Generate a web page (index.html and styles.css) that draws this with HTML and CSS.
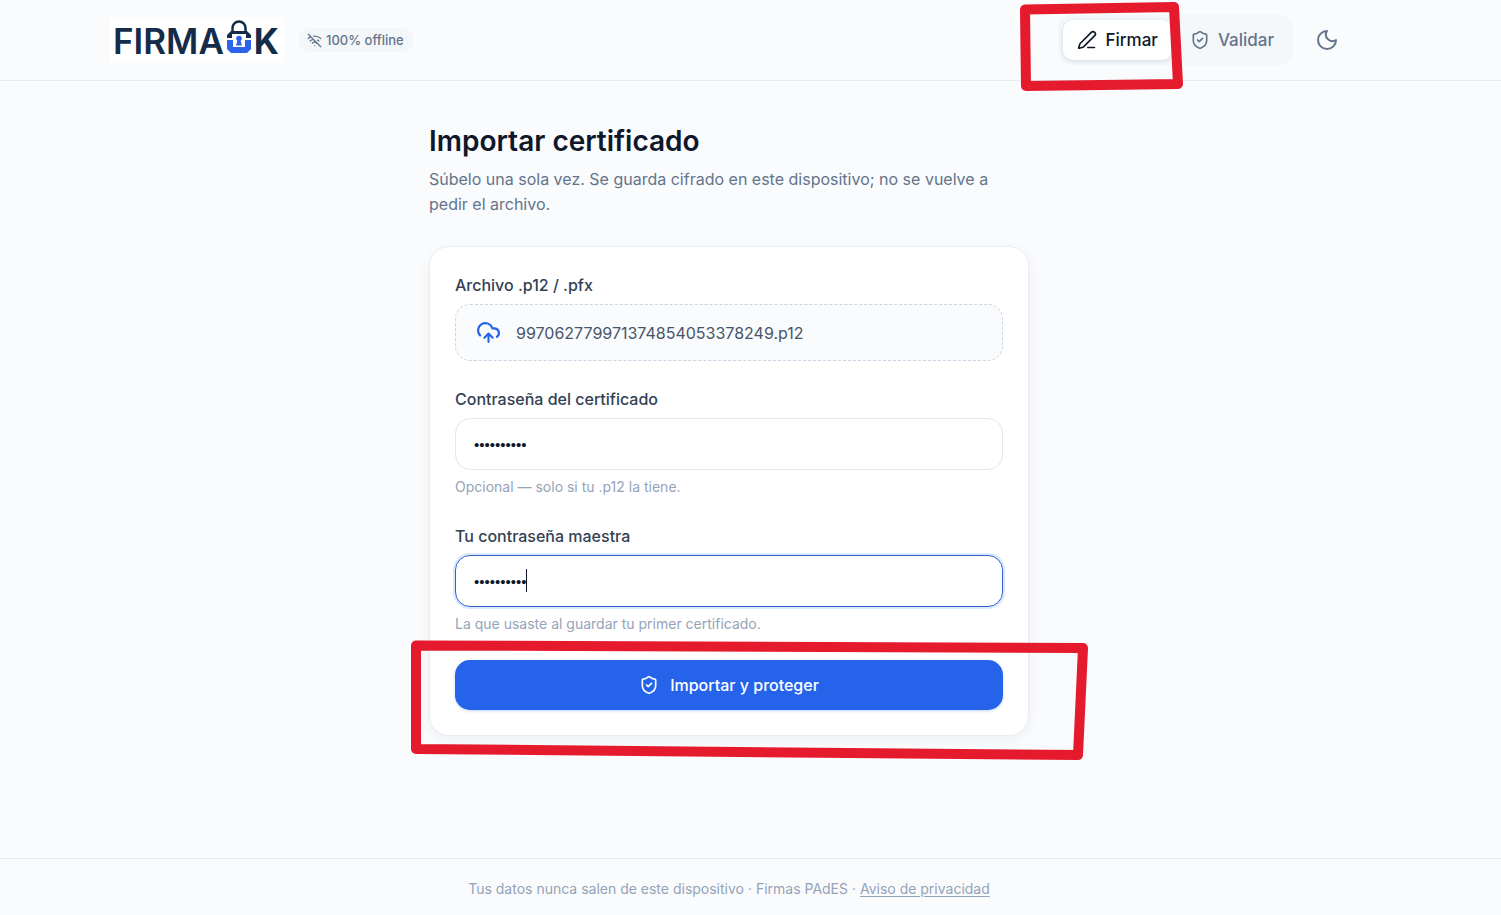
FILE: index.html
```html
<!DOCTYPE html>
<html lang="es">
<head>
<meta charset="utf-8">
<meta name="viewport" content="width=device-width, initial-scale=1">
<title>FirmaOK</title>
<link rel="stylesheet" href="styles.css">
</head>
<body>
<header class="header">
  <div class="header-inner">
    <a class="logo" href="#" aria-label="FirmaOK">
      <span class="logo-text">FIRMA</span>
      <svg class="logo-lock" viewBox="0 0 26 34" aria-hidden="true">
        <path d="M6.500 13V8a6.500 6.500 0 0 1 13 0v5" fill="none" stroke="#152b4a" stroke-width="2.500"/>
        <path d="M1 18v-3l4-4h16l4 4v3h-5v-4H6v4z" fill="#152b4a"/>
        <path d="M1 20h6v7h12v-7h6v9l-4 4H5l-4-4z" fill="#2b63ed"/>
        <circle cx="13" cy="18.500" r="2.800" fill="#2b63ed"/>
        <path d="M12 19h2l2 6.500h-6z" fill="#2b63ed"/>
      </svg>
      <span class="logo-text logo-k">K</span>
    </a>
    <span class="badge">
      <svg class="icon-s" viewBox="0 0 24 24" aria-hidden="true"><path d="M12 20h.01M8.500 16.429a5 5 0 0 1 7 0M5 12.859a10 10 0 0 1 5.170-2.690M19 12.859a10 10 0 0 0-2.007-1.523M2 8.820a15 15 0 0 1 4.177-2.643M22 8.820a15 15 0 0 0-11.288-3.764M2 2l20 20"/></svg>
      100% offline
    </span>
    <nav class="nav">
      <div class="tabs">
        <button class="tab tab-active" type="button">
          <svg class="icon" viewBox="0 0 24 24" aria-hidden="true"><path d="M13 21h8M21.174 6.812a1 1 0 0 0-3.986-3.987L3.842 16.174a2 2 0 0 0-.5.830l-1.321 4.352a.5.5 0 0 0 .623.622l4.353-1.320a2 2 0 0 0 .830-.497z"/></svg>
          Firmar
        </button>
        <button class="tab" type="button">
          <svg class="icon" viewBox="0 0 24 24" aria-hidden="true"><path d="M20 13c0 5-3.500 7.500-7.660 8.950a1 1 0 0 1-.670-.010C7.500 20.500 4 18 4 13V6a1 1 0 0 1 1-1c2 0 4.500-1.200 6.240-2.720a1.170 1.170 0 0 1 1.520 0C14.510 3.810 17 5 19 5a1 1 0 0 1 1 1zM9 12l2 2 4-4"/></svg>
          Validar
        </button>
      </div>
      <button class="theme" type="button" aria-label="Modo oscuro">
        <svg class="icon-l" viewBox="0 0 24 24" aria-hidden="true"><path d="M12 3a6.500 6.500 0 0 0 9 9 9 9 0 1 1-9-9z"/></svg>
      </button>
      <svg class="mark mark-nav" viewBox="0 0 164 92" aria-hidden="true"><path d="M6 9.500 155 7l4 77-152 2z"/></svg>
    </nav>
  </div>
</header>
<main class="main">
  <h1 class="title">Importar certificado</h1>
  <p class="subtitle">Súbelo una sola vez. Se guarda cifrado en este dispositivo; no se vuelve a pedir el archivo.</p>
  <form class="card">
    <div class="field">
      <label class="label" for="file">Archivo .p12 / .pfx</label>
      <button class="file" id="file" type="button">
        <svg class="icon-u" viewBox="0 0 24 24" aria-hidden="true"><path d="M12 13v8M4 14.899A7 7 0 1 1 15.710 8h1.790a4.500 4.500 0 0 1 2.500 8.242M8 17l4-4 4 4"/></svg>
        <span>997062779971374854053378249.p12</span>
      </button>
    </div>
    <div class="field">
      <label class="label" for="cert">Contraseña del certificado</label>
      <input class="input" id="cert" type="password" value="abcdefghij">
      <p class="hint">Opcional — solo si tu .p12 la tiene.</p>
    </div>
    <div class="field">
      <label class="label" for="master">Tu contraseña maestra</label>
      <div class="control">
        <input class="input input-focus" id="master" type="password" value="abcdefghij">
        <span class="caret"></span>
      </div>
      <p class="hint">La que usaste al guardar tu primer certificado.</p>
    </div>
    <button class="submit" type="button">
      <svg class="icon" viewBox="0 0 24 24" aria-hidden="true"><path d="M20 13c0 5-3.500 7.500-7.660 8.950a1 1 0 0 1-.670-.010C7.500 20.500 4 18 4 13V6a1 1 0 0 1 1-1c2 0 4.500-1.200 6.240-2.720a1.170 1.170 0 0 1 1.520 0C14.510 3.810 17 5 19 5a1 1 0 0 1 1 1zM9 12l2 2 4-4"/></svg>
      Importar y proteger
    </button>
    <svg class="mark mark-card" viewBox="0 0 680 122" aria-hidden="true"><path d="M6 7.500 673 10l-5 107-662-6z"/></svg>
  </form>
</main>
<footer class="footer">
  <p class="footer-text">Tus datos nunca salen de este dispositivo · Firmas PAdES · <a class="link" href="#">Aviso de privacidad</a></p>
</footer>
</body>
</html>
```
FILE: styles.css
```css
* { box-sizing: border-box; }
body {
  margin: 0;
  min-height: 100vh;
  display: flex;
  flex-direction: column;
  background: #f9fbfd;
  color: #0f172a;
  font-family: Inter, "Liberation Sans", sans-serif;
  font-size: 16px;
}
button, input { font: inherit; }
svg { fill: none; stroke: currentColor; stroke-width: 2; stroke-linecap: round; stroke-linejoin: round; flex: none; }
.header { border-bottom: 1px solid #e8ecf2; padding-right: 43px; }
.header-inner {
  max-width: 1240px;
  height: 80px;
  margin: 0 auto;
  display: flex;
  align-items: center;
}
.logo {
  display: flex;
  align-items: center;
  gap: 2px;
  width: 175px;
  height: 46px;
  padding-left: 4px;
  background: #fff;
  color: #152b4a;
  text-decoration: none;
}
.logo-text { padding-top: 2px; font-size: 35px; font-weight: 600; line-height: 46px; }
.logo-k { font-weight: 700; }
.logo-lock { width: 26px; height: 34px; margin-bottom: 6px; stroke: none; stroke-linecap: butt; }
.badge {
  display: flex;
  align-items: center;
  gap: 4px;
  height: 24px;
  margin-left: 14px;
  padding: 0 10px 0 9px;
  border-radius: 12px;
  background: #f3f7fa;
  color: #64748b;
  font-size: 13px;
  font-weight: 500;
}
.icon-s { width: 15px; height: 15px; }
.icon { width: 20px; height: 20px; stroke-width: 2; }
.icon-l { width: 24px; height: 24px; }
.icon-u { width: 25px; height: 25px; color: #2563eb; }
.nav { position: relative; display: flex; align-items: center; gap: 11px; margin-left: auto; }
.tabs { display: flex; gap: 4px; padding: 5px; border-radius: 14px; background: #f3f7fa; }
.tab {
  display: flex;
  align-items: center;
  gap: 8px;
  height: 40px;
  padding: 0 14px;
  border: 0;
  border-radius: 10px;
  background: transparent;
  color: #64748b;
  font-size: 17px;
  font-weight: 500;
}
.tab-active { background: #fff; color: #0f172a; box-shadow: 0 1px 4px #0f172a22; }
.theme {
  display: grid;
  place-items: center;
  width: 45px;
  height: 45px;
  padding: 0;
  border: 0;
  background: transparent;
  color: #64748b;
}
.mark { position: absolute; overflow: visible; pointer-events: none; stroke: #e51a2d; stroke-width: 10; }
.mark-nav { width: 164px; height: 92px; right: 166px; top: -15px; }
.mark-card { width: 680px; height: 122px; left: -20px; bottom: -25px; }
.main { width: 100%; padding: 42px 43px 40px 0; flex: 1; }
.main > * { max-width: 600px; margin: 0 auto; }
.title { font-size: 28px; font-weight: 600; line-height: 36px; }
.main > .subtitle { margin-top: 8px; color: #64748b; line-height: 25px; }
.main > .card {
  position: relative;
  display: flex;
  flex-direction: column;
  gap: 25px;
  margin-top: 29px;
  padding: 25px;
  border: 1px solid #e9edf3;
  border-radius: 20px;
  background: #fff;
  box-shadow: 0 4px 14px #0f172a0d;
}
.field { display: flex; flex-direction: column; gap: 6px; }
.label { color: #334155; font-weight: 500; line-height: 26px; }
.file {
  display: flex;
  align-items: center;
  gap: 15px;
  height: 57px;
  padding: 0 20px;
  border: 1px dashed #cbd5e1;
  border-radius: 15px;
  background: #f9fbfd;
  color: #475569;
}
.control { position: relative; }
.input {
  display: block;
  width: 100%;
  height: 52px;
  padding: 0 18px;
  border: 1px solid #e2e8f0;
  border-radius: 15px;
  outline: 0;
  background: #fff;
  color: #0f172a;
  font-family: "Liberation Sans", sans-serif;
  font-size: 15px;
}
.input-focus { border-color: #2f62c9; box-shadow: 0 0 0 2px #dbe8fd; }
.caret { position: absolute; left: 71px; top: 14px; width: 1px; height: 23px; background: #0f172a; }
.hint { margin: 0; color: #94a3b8; font-size: 14px; line-height: 22px; }
.submit {
  display: flex;
  align-items: center;
  justify-content: center;
  gap: 11px;
  height: 50px;
  border: 0;
  border-radius: 15px;
  background: #2563eb;
  color: #fff;
  font-weight: 500;
  box-shadow: 0 1px 3px #2563eb44;
}
.footer { border-top: 1px solid #e8ecf2; padding: 18px 43px 14px 0; text-align: center; }
.footer-text { margin: 0; color: #94a3b8; font-size: 14px; line-height: 24px; }
.link { color: inherit; text-underline-offset: 2px; }
```
